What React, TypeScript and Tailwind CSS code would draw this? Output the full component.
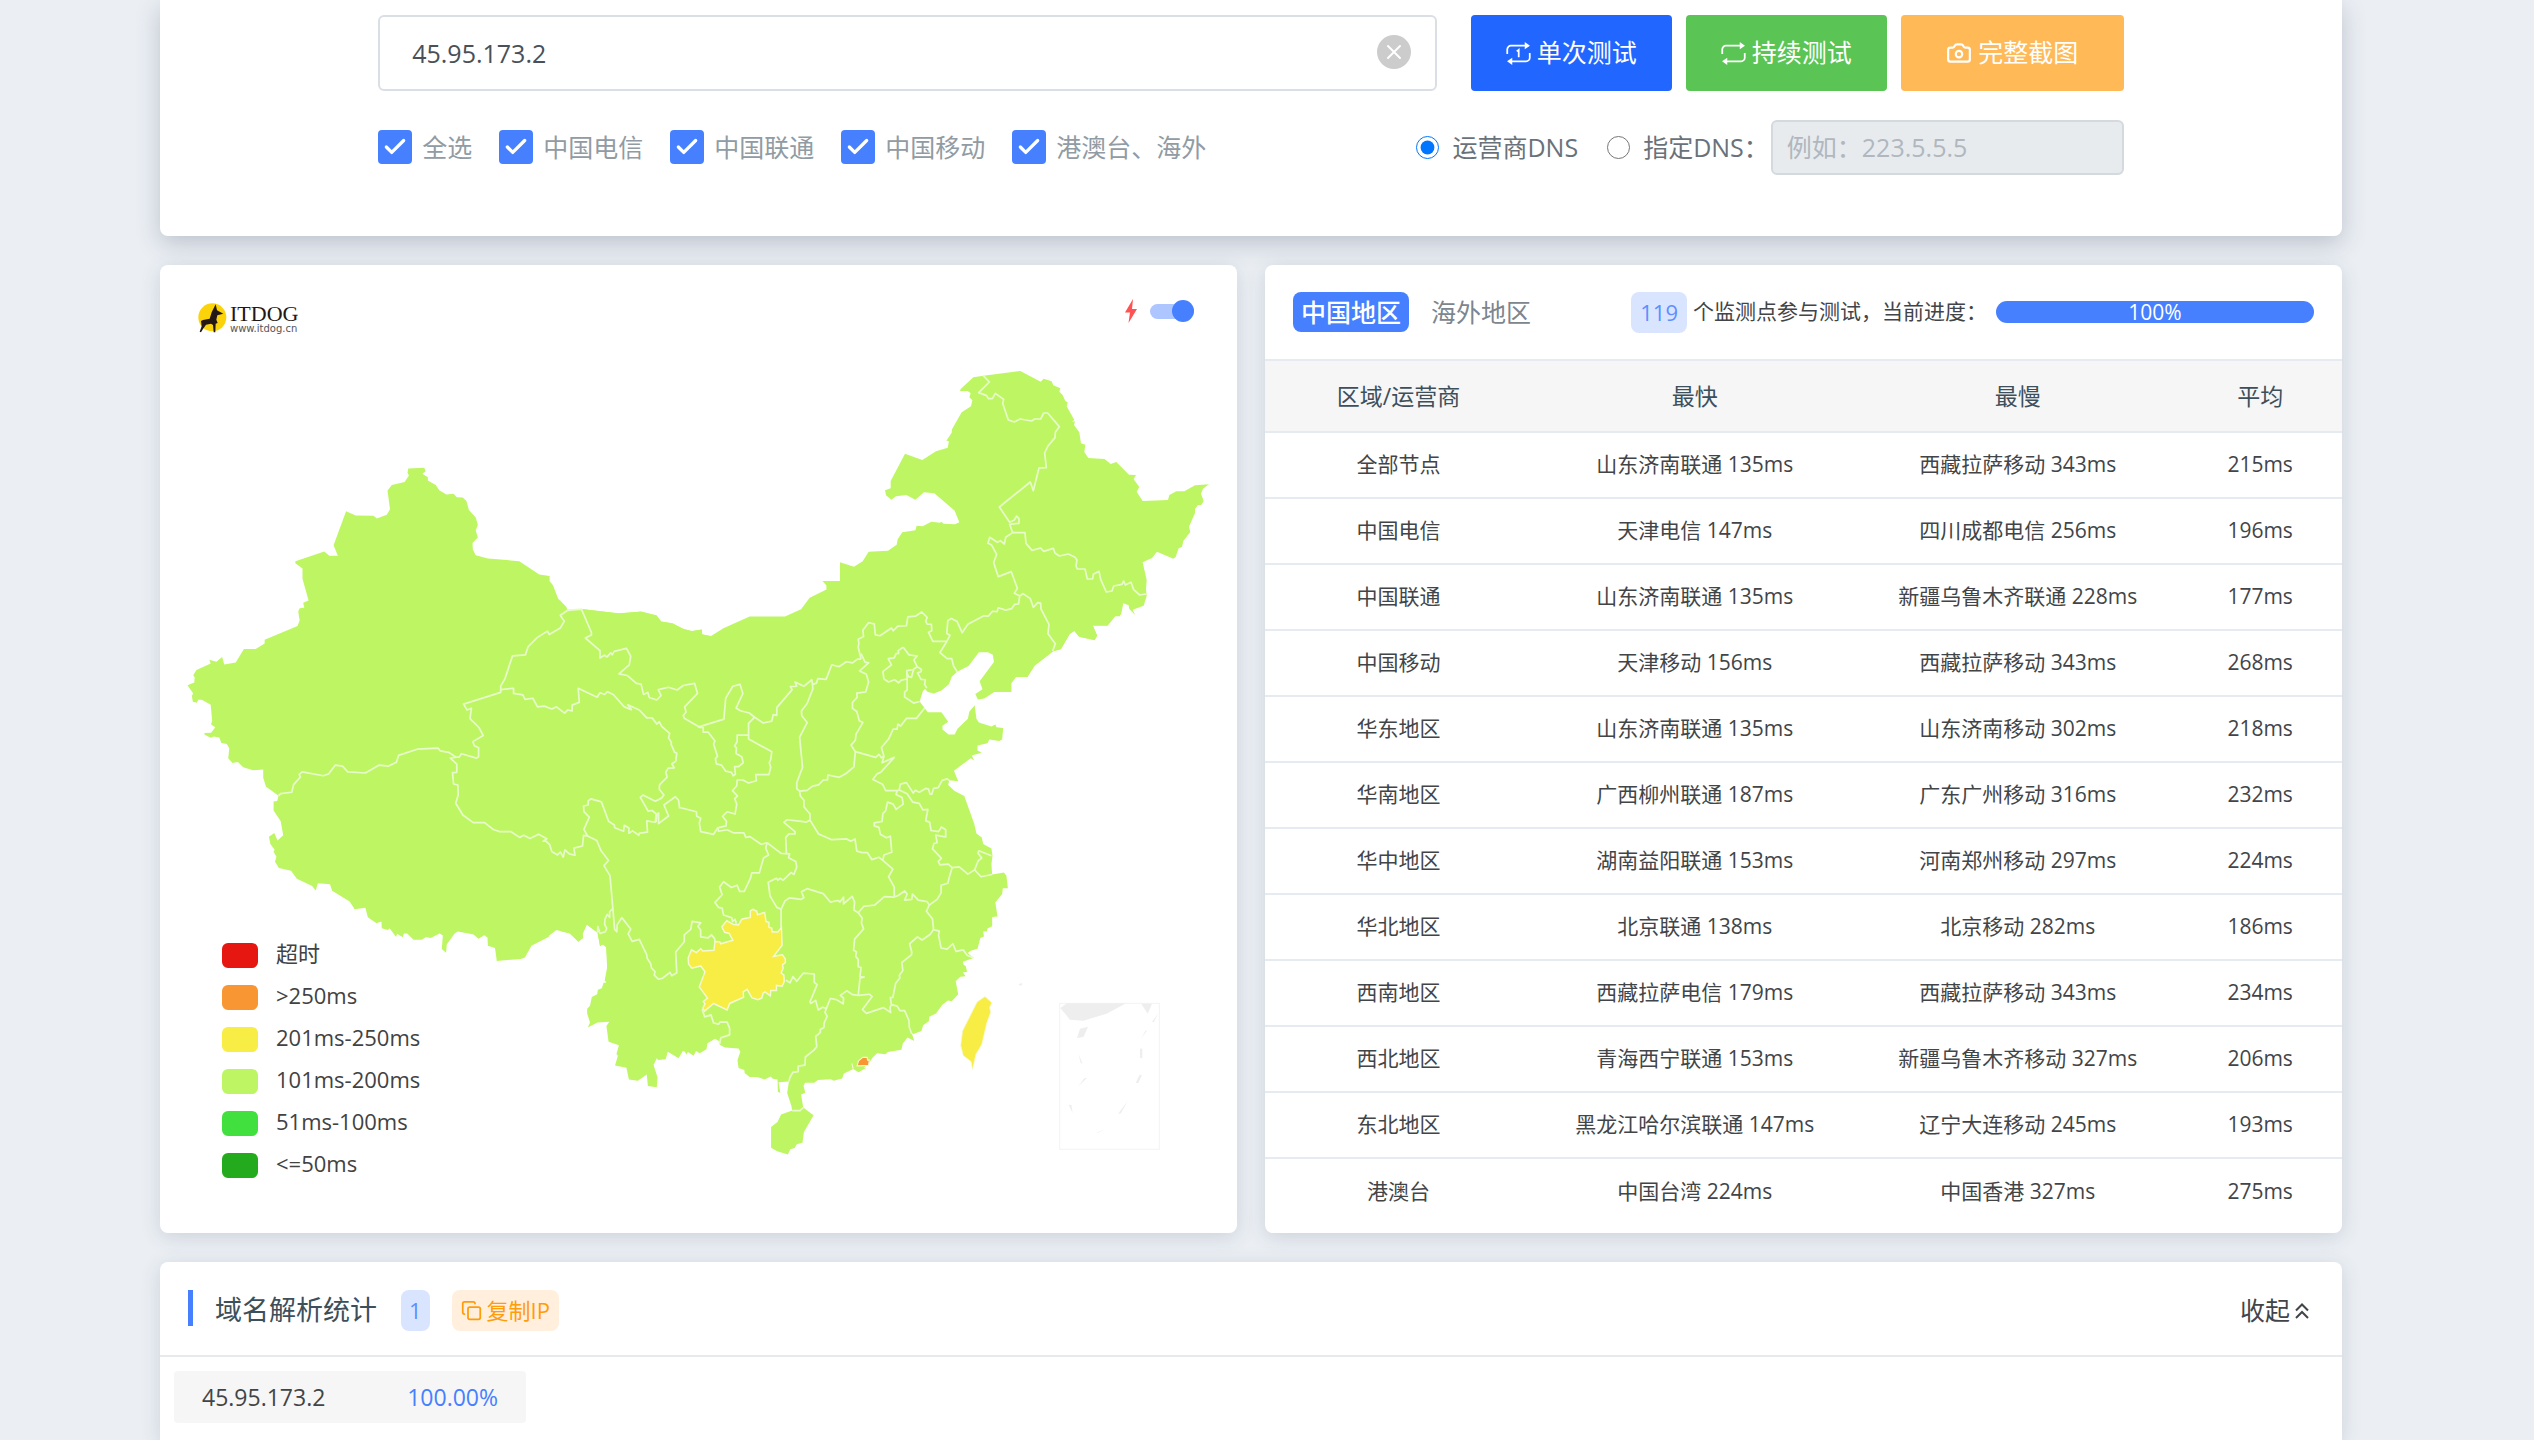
import { useState } from "react";
import { Camera, Check, Copy, X } from "lucide-react";

const carriers = ["全选", "中国电信", "中国联通", "中国移动", "港澳台、海外"];

const legend = [
  { color: "bg-[#e61610]", label: "超时" },
  { color: "bg-[#f79633]", label: ">250ms" },
  { color: "bg-[#f7ed44]", label: "201ms-250ms" },
  { color: "bg-[#bef663]", label: "101ms-200ms" },
  { color: "bg-[#42e03f]", label: "51ms-100ms" },
  { color: "bg-[#24aa1d]", label: "<=50ms" },
];

const rows = [
  ["全部节点", "山东济南联通 135ms", "西藏拉萨移动 343ms", "215ms"],
  ["中国电信", "天津电信 147ms", "四川成都电信 256ms", "196ms"],
  ["中国联通", "山东济南联通 135ms", "新疆乌鲁木齐联通 228ms", "177ms"],
  ["中国移动", "天津移动 156ms", "西藏拉萨移动 343ms", "268ms"],
  ["华东地区", "山东济南联通 135ms", "山东济南移动 302ms", "218ms"],
  ["华南地区", "广西柳州联通 187ms", "广东广州移动 316ms", "232ms"],
  ["华中地区", "湖南益阳联通 153ms", "河南郑州移动 297ms", "224ms"],
  ["华北地区", "北京联通 138ms", "北京移动 282ms", "186ms"],
  ["西南地区", "西藏拉萨电信 179ms", "西藏拉萨移动 343ms", "234ms"],
  ["西北地区", "青海西宁联通 153ms", "新疆乌鲁木齐移动 327ms", "206ms"],
  ["东北地区", "黑龙江哈尔滨联通 147ms", "辽宁大连移动 245ms", "193ms"],
  ["港澳台", "中国台湾 224ms", "中国香港 327ms", "275ms"],
];

// The map is drawn in sections, each with its own scale
const WEST = "translate(160 440) scale(0.35714 0.34438)";
const SOUTH = "translate(560 580) scale(0.35714 0.38265)";
const NORTHEAST = "translate(840 340) scale(0.33333)";
const INSET = "translate(1020 950) scale(0.33333)";

const westLand =
  "M695,80L740,78 744,88 735,95 750,105 750,115 772,128 782,143 802,155 822,153 831,163 848,164 858,174 865,200 884,222 890,243 884,260 890,280 875,296 876,315 884,332 918,341 1006,349 1062,388 1091,392 1091,407 1100,418 1115,458 1138,482 1141,492 1180,488 1284,500 1347,496 1390,506 1403,524 1435,529 1465,546 1489,552 1517,547 1518,561 1543,566 1568,550 1568,1568 1245,1568 1252,1528 1249,1470 1240,1462 1232,1467 1225,1428 1195,1405 1183,1432 1185,1442 1172,1453 1147,1430 1110,1420 1090,1436 1088,1440 1040,1466 1022,1500 1010,1504 943,1510 938,1472 918,1466 917,1442 908,1435 892,1445 878,1433 834,1424 825,1430 803,1462 801,1486 789,1475 792,1436 783,1430 758,1443 745,1440 733,1448 710,1448 692,1430 683,1430 680,1441 664,1431 661,1440 643,1415 638,1420 621,1415 620,1395 606,1400 582,1383 575,1355 545,1360 531,1337 482,1306 476,1287 442,1284 436,1305 426,1292 383,1271 367,1248 333,1240 322,1222 326,1207 318,1193 321,1187 309,1170 305,1149 320,1138 329,1160 345,1145 338,1104 318,1073 318,1047 328,1045 332,1030 297,1004 289,978 289,954 260,956 233,947 218,932 203,935 191,921 194,892 187,880 172,877 166,861 150,858 142,862 125,853 124,848 143,847 155,831 143,823 146,812 142,766 117,751 107,751 103,760 92,757 89,740 93,733 77,709 96,701 97,686 93,680 102,665 142,646 138,635 158,641 174,627 180,649 212,643 235,604 268,604 293,588 293,577 385,537 391,521 387,495 391,486 404,484 401,470 416,463 399,400 399,370 379,355 379,349 460,321 474,333 498,333 486,303 521,204 548,216 598,217 607,225 635,214 644,198 637,144 649,128 685,119 697,100 693,92Z";

const southLand =
  "M0,50L20,75 60,73 165,85 227,80 271,91 283,106 315,111 345,125 369,131 397,127 398,140 424,145 456,124 531,93 630,93 675,74 699,44 746,22 746,12 735,0 1568,0 1568,92 1555,92 1533,117 1492,117 1504,143 1497,154 1455,146 1440,130 1426,140 1403,178 1380,184 1328,222 1309,251 1277,251 1264,267 1264,290 1216,290 1188,307 1170,310 1163,295 1183,283 1175,262 1215,212 1212,193 1198,186 1173,186 1144,222 1112,237 1097,250 1089,270 1068,286 1047,294 1030,290 1022,282 1016,288 1007,315 1021,332 1030,343 1068,343 1087,368 1071,378 1071,388 1088,401 1105,401 1113,386 1142,360 1146,342 1161,325 1166,360 1173,370 1208,380 1219,375 1222,382 1241,384 1238,414 1230,418 1202,414 1197,424 1169,430 1169,443 1181,449 1153,456 1160,470 1150,463 1103,496 1115,523 1090,521 1087,533 1105,549 1132,562 1160,635 1166,660 1181,670 1185,687 1208,699 1211,718 1208,740 1210,767 1243,762 1250,770 1254,803 1240,803 1238,818 1219,840 1225,877 1210,878 1210,902 1197,908 1195,916 1185,916 1187,929 1177,933 1169,961 1150,966 1142,972 1158,985 1128,995 1130,1003 1136,1006 1140,1021 1128,1023 1136,1033 1121,1034 1108,1046 1115,1080 1097,1098 1086,1096 1070,1108 1053,1130 1034,1139 1033,1150 1017,1161 1012,1176 990,1184 985,1182 992,1202 973,1193 960,1209 956,1225 918,1231 911,1237 888,1234 875,1246 864,1262 850,1272 858,1272 836,1284 821,1275 795,1287 790,1300 766,1306 758,1302 722,1304 712,1311 686,1311 682,1320 687,1338 675,1341 681,1376 710,1396 683,1440 679,1468 663,1472 657,1482 645,1485 638,1499 608,1490 591,1481 591,1427 609,1414 619,1394 650,1384 648,1372 636,1338 641,1308 612,1310 617,1338 610,1335 609,1303 596,1301 590,1295 573,1303 552,1296 531,1296 517,1286 516,1278 500,1273 497,1252 505,1230 500,1222 462,1219 447,1212 448,1204 434,1196 413,1208 410,1224 391,1234 381,1228 374,1241 358,1231 354,1238 350,1230 344,1228 332,1247 302,1230 296,1250 275,1252 271,1247 262,1265 273,1297 271,1323 246,1320 243,1290 218,1306 193,1303 186,1272 154,1266 162,1241 158,1236 165,1213 136,1204 130,1163 138,1152 105,1154 78,1167 84,1154 76,1130 76,1118 84,1110 89,1087 104,1080 106,1068 117,1064 122,1050 129,1050 126,1043 131,1025 133,1000 130,955 121,949 112,953 105,917 75,897 63,922 65,933 51,943 27,920 0,915Z";

const northeastLand =
  "M430,104L541,90 602,122 611,113 635,121 640,133 661,142 658,152 668,162 676,180 683,184 680,196 703,237 695,243 705,241 702,252 718,274 723,307 736,311 733,333 745,351 794,354 812,369 829,363 867,401 888,402 881,415 898,438 890,452 908,480 984,477 988,462 1009,451 1033,451 1065,433 1107,430 1089,443 1083,458 1091,480 1084,492 1074,492 1065,504 1065,516 1047,557 1051,573 1030,600 1026,618 1016,622 1007,648 1000,653 951,632 936,651 908,664 920,717 918,745 920,765 911,794 878,806 886,823 868,804 866,793 850,787 843,821 825,824 803,853 758,853 771,883 764,898 717,887 703,870 690,878 662,925 640,930 585,973 562,1008 514,900 0,900 0,664 42,677 68,661 86,632 144,629 170,611 173,595 187,574 226,568 230,554 248,556 274,542 300,545 304,542 311,548 345,550 358,544 344,509 283,457 252,454 226,476 199,462 168,466 154,476 138,463 135,448 152,442 152,420 195,338 247,357 288,331 323,320 327,301 319,299 335,275 336,265 365,214 393,196 397,178 388,169 392,157 383,150 360,150 362,144 400,109Z";

const westBorders = [
  "1141,492 1121,506 1127,516 1132,523 1121,543 1090,562 1085,552 1056,571 1031,597 1023,621 987,624 966,690 954,712 954,730 850,764 860,781 872,776 868,806 893,832 905,855 876,873 880,885 892,891 892,917 886,921 844,908 838,918 829,918",
  "829,918 808,904 785,900 779,892 720,895 668,913 662,933 640,944 614,941 575,964 526,961 511,944 491,941 472,967 457,972 398,961 390,968 393,976 374,998 369,1020 338,1024 332,1030",
  "829,918 813,921 831,938 831,962 819,963 822,996 834,999 835,1028 828,1052 848,1086 877,1108 909,1108 933,1128 950,1134 982,1134 1007,1151 1018,1145 1036,1154 1060,1142 1083,1155 1073,1162 1080,1161 1091,1172 1097,1192 1113,1202 1121,1194 1129,1208 1134,1187 1146,1199 1162,1203 1159,1182 1183,1176 1186,1145 1197,1147 1187,1128 1202,1092 1187,1076 1186,1060 1199,1057 1199,1045 1207,1039 1236,1048 1256,1104 1272,1115 1273,1123 1298,1133 1300,1116 1313,1124 1313,1139 1323,1132 1341,1145 1342,1139 1365,1136 1363,1103 1387,1107 1389,1085 1396,1080 1396,1111 1424,1089 1411,1057 1443,1033 1452,1043 1455,1067",
  "1197,1147 1223,1160 1235,1190 1256,1218 1243,1233 1260,1262 1268,1357 1273,1418 1279,1425 1280,1405 1293,1384 1318,1417 1311,1431 1322,1453 1342,1447 1363,1492 1364,1502 1374,1518 1376,1530 1386,1541 1384,1551 1396,1563 1407,1560 1428,1543 1433,1553 1447,1544 1444,1484 1468,1454 1468,1434 1486,1418 1490,1395 1514,1399 1506,1410 1514,1420 1514,1440 1535,1443 1544,1434 1553,1445 1554,1455",
  "1268,1357 1259,1367 1259,1383 1252,1375 1246,1388 1245,1404 1251,1415 1247,1425 1232,1430 1226,1410 1225,1428",
  "954,722 990,718 990,733 1016,737 1022,750 1044,747 1057,772 1076,770 1097,778 1110,772 1133,790 1142,781 1154,784 1154,767 1174,759 1171,718 1224,744 1232,731 1245,736 1253,728 1270,737 1300,772 1320,780 1310,766 1342,781 1363,804 1378,804 1391,822 1398,815 1405,829 1427,849 1424,862 1432,875 1431,880 1441,904 1447,907 1444,930 1433,938 1440,949 1423,950 1416,962 1420,976 1399,998 1398,1011 1411,1028 1404,1037 1387,1046 1352,1028 1345,1035 1367,1075 1378,1073 1392,1085 1389,1107",
  "1141,492 1180,488 1208,556 1208,563 1191,572 1232,609 1232,630 1244,622 1252,627 1262,615 1266,621 1272,611 1306,602 1318,625 1314,650 1285,676 1309,681 1334,704 1347,706 1354,736 1366,730 1370,745 1391,752 1403,739 1395,722 1424,715 1448,723 1465,710 1497,704 1505,733 1469,772 1473,787 1465,797 1468,805 1509,830",
];

const southBorders = [
  "387,382 459,361 464,306 484,275 504,270 512,294 493,332 505,339 530,345 545,356 569,371 593,366 597,349 607,351 607,331 650,284 645,276 663,275 658,264 683,275 705,258 707,270 718,267 722,255 745,257 761,219 781,224 802,211 819,214 833,204 843,204",
  "387,382 401,383 401,395 415,395 434,418 430,426 441,458 435,465 438,478 452,481 464,497 480,500 485,509 491,505 489,485 500,485 513,475 509,459 493,451 494,436 489,431 496,420 496,403 528,403 528,372 545,356",
  "528,403 528,413 593,446 590,467 586,475 590,487 585,506 548,506 550,522 528,528 512,520 496,520 495,535 483,548 497,562 489,569 495,583 490,609 468,603 455,615 466,628 465,640 442,645 444,654 468,650 485,658 515,658 520,670 532,668 563,688 580,684",
  "335,592 382,603 383,615 394,620 390,633 394,655 430,662 442,645",
  "707,270 708,282 692,320 676,340 677,352 692,370 671,408 679,487 663,527 663,543 671,549 673,562 683,573 683,590 700,609 700,625",
  "671,549 692,547 707,536 724,533 737,520 749,520 750,507 782,513 801,503 823,486 827,446 815,429 827,416 829,400 848,370 838,365 831,341 819,333 819,317 832,304 831,293 856,290 864,264 858,244 839,235 864,214 854,212 843,190",
  "843,204 835,173 837,163 835,152 850,145 848,129 864,109 880,112 883,141 896,143 928,123 933,130 946,118 970,117 974,94 995,92 1013,81 1028,95 1024,105 1028,113 1040,113 1041,130 1032,134 1044,158 1083,158 1092,142 1083,137 1086,103 1096,98 1112,106 1126,135 1142,113 1187,91 1199,92 1211,79 1224,80 1227,70 1248,76 1265,72 1273,61 1284,60 1287,40",
  "1083,158 1064,187 1084,203 1097,203 1102,222 1112,237",
  "961,173 977,193 1000,196 991,206 1000,224 988,232 971,234 972,256 956,259 948,266 937,258 920,264 907,256 904,237 928,219 919,203 936,201 941,190 948,189 947,182 961,173",
  "1000,224 1012,231 1011,237 1001,240 1011,257 1023,258 1021,270 1027,280",
  "971,240 976,250 984,252 990,232",
  "972,256 972,285 965,290 965,303 990,319 1007,315",
  "1021,332 998,359 970,359 954,379 946,374 944,387 933,387 920,413 900,435 907,458 902,475 936,461 898,500 888,504 876,519 903,531 912,548 944,548",
  "827,446 884,461 893,453 900,462 907,458",
  "944,548 950,546 953,531 970,527 989,554 995,547 1006,552 1024,542 1032,544 1036,557 1041,557 1046,542 1059,540 1070,521 1084,517 1090,521",
  "950,546 972,556 988,578 1006,581 1016,598 1030,597 1024,627 1035,630 1039,652 1060,655 1068,643 1080,650 1080,669 1052,664 1056,684 1047,686 1043,700 1068,725 1059,733 1064,742 1087,740 1098,749 1118,747 1142,766 1161,755",
  "944,548 941,558 958,566 961,583 941,597 933,583 917,578 912,600 904,608 902,628 880,632 880,640 893,644 897,662 914,671 925,667 929,709 907,716 904,730 932,753 920,773 936,800 936,823",
  "700,625 724,661 761,676 803,674 814,680 826,674 831,706 846,710 861,710 873,728 893,722 904,730",
  "700,625 690,630 676,628 635,624 627,631 658,655 658,661 641,661 632,670 634,712",
  "580,684 619,712 643,713 640,723 660,733 663,747 655,767 647,762 625,782 616,777 610,782 606,777 583,787 588,823 607,853 619,858 619,906",
  "580,684 576,698 584,716 570,724 558,763 537,763 534,775 516,811 503,811 496,795 480,801 458,786 447,800 454,820 434,840 444,853 454,855 458,873 481,880 483,890 490,884 494,896",
  "619,858 630,836 643,828 675,832 683,828 676,812 692,804 737,817 757,839 778,835 784,839 794,826 794,844 818,824 825,839 823,860 835,867",
  "835,867 851,850 881,847 908,825 936,826 947,822 965,810 972,818 965,834 985,832 987,818 1003,834 1028,838 1034,847",
  "1098,749 1090,774 1086,790 1067,795 1067,815 1056,832 1034,847 1026,863 1043,883 1046,911 1062,915 1060,926 1067,959 1084,962 1100,948 1109,968 1129,964 1140,978 1158,985",
  "1046,911 1036,924 1014,938 1001,930 979,948 985,970 984,977 957,997 960,1018 950,1031 952,1037 940,1051 932,1088 925,1089 928,1107",
  "835,867 846,881 844,894 850,909 825,936 822,965 830,969 828,981 835,989 835,1008 843,1010 840,1034 852,1035 840,1038 835,1083",
  "835,1083 819,1081 803,1071 785,1083 794,1090 793,1105 774,1094 757,1091 746,1117 735,1114 723,1121 716,1096 702,1104 700,1100 720,1055 712,1049 712,1027 681,1025 663,1046 652,1034 644,1050 632,1043",
  "835,1083 867,1080 874,1086 847,1120 858,1130 906,1115 926,1128 924,1115 928,1107 944,1111 952,1123 965,1123 977,1148 978,1166 985,1184",
  "746,1117 742,1127 748,1138 740,1154 739,1167 729,1172 729,1180 716,1190 719,1217 711,1226 687,1244 686,1265 667,1268 667,1282 652,1284 644,1297 641,1308",
  "398,1119 405,1139 423,1134 430,1155 444,1158 449,1152 468,1153 475,1169 475,1186 450,1194 447,1210",
  "650,1384 672,1384 681,1376",
  "1208,718 1173,705 1170,711 1181,724 1171,731 1161,755 1179,773 1210,767",
];

const northeastBorders = [
  "430,104 448,123 416,155 440,164 445,173 457,173 466,157 491,175 488,187 505,237 523,243 540,234 575,240 584,234 602,234 611,216 623,216 658,257 646,274 645,290 624,315 614,336 619,380 597,381 580,449 571,423 478,498 509,544 523,537 530,525 537,533 537,547 509,550 518,575",
  "518,575 497,589 493,609 481,599 472,604 449,589 444,607 454,611 470,640 461,665 475,707 514,692 532,742 523,757 540,765",
  "518,575 555,575 558,607 576,628 602,621 611,631 640,622 645,636 658,645 685,639 705,649 711,657 708,675 712,684 735,684 742,714 758,714 760,700 777,691 782,715 799,753 816,750 821,735 846,730 851,720 856,732 873,724 881,746 899,762 918,759",
  "540,765 549,758 571,773 580,799 593,785 602,786 603,804 627,850 624,878 646,908 638,930",
];

const guizhou =
  "540,858 551,863 553,872 573,866 577,890 585,892 585,905 593,907 594,917 610,917 620,906 622,952 598,981 623,977 631,988 631,997 623,1003 625,1012 619,1024 627,1030 628,1047 622,1059 606,1057 606,1070 590,1070 589,1084 574,1074 569,1077 565,1090 554,1094 537,1089 524,1067 513,1074 514,1088 475,1104 468,1121 430,1104 405,1124 400,1116 406,1105 401,1099 413,1090 390,1061 406,1021 394,1006 369,1012 360,1001 359,985 368,964 382,971 394,961 400,967 431,965 434,942 447,943 450,948 484,939 474,921 461,918 453,904 467,888 486,898 500,899 509,884 533,879 533,862";

const taiwan =
  "1168,1100 1190,1086 1209,1102 1203,1115 1206,1127 1195,1155 1181,1211 1165,1236 1155,1277 1151,1256 1129,1240 1122,1214 1127,1176";

function Borders({ lines, transform }: { lines: string[]; transform: string }) {
  return (
    <g transform={transform} fill="none" stroke="#e8facb" strokeWidth="1.7" strokeLinejoin="round">
      {lines.map((points) => (
        <polyline key={points} points={points} vectorEffect="non-scaling-stroke" />
      ))}
    </g>
  );
}

function ChinaMap() {
  return (
    <svg viewBox="160 264 1077 968" className="block w-full [grid-area:1/1]" aria-hidden="true">
      <g fill="#bef663">
        <path d={westLand} transform={WEST} />
        <path d={southLand} transform={SOUTH} />
        <path d={northeastLand} transform={NORTHEAST} />
      </g>
      <Borders lines={westBorders} transform={WEST} />
      <Borders lines={southBorders} transform={SOUTH} />
      <Borders lines={northeastBorders} transform={NORTHEAST} />
      <g transform={SOUTH} stroke="#f6f8d4">
        <polygon points={guizhou} fill="#f7ed44" strokeWidth="4" />
        <polygon points={taiwan} fill="#f7ed44" strokeWidth="2" />
        <polygon points="836,1254 848,1245 860,1245 861,1252 866,1252 864,1266 832,1267" fill="#f79633" strokeWidth="3" />
        <polyline points="817,1261 821,1275" fill="none" strokeWidth="3" />
        <polygon points="1283,1056 1293,1050 1293,1057" fill="#ececec" stroke="none" />
      </g>
      <g transform={INSET} fill="#eeeeee">
        <rect x="119" y="157" width="299" height="438" fill="none" stroke="#f3f3f3" strokeWidth="3" />
        <path d="M121,171L141,157 318,157 260,188 190,209 150,206Z" />
        <path d="M364,158H396L383,188Z" />
        <path d="M180,233L204,227 191,257 171,262Z" />
        <path d="M175,308L188,338 182,335Z" />
        <path d="M201,381L193,382 174,407Z" />
        <path d="M146,461L154,462 158,487Z" />
        <path d="M323,450L303,487 294,489Z" />
        <path d="M258,534L230,547 232,544Z" />
        <path d="M366,371L355,396 347,396 358,373Z" />
        <path d="M360,293H367V321H360Z" />
        <path d="M382,238L376,240 364,262Z" />
        <path d="M414,188L402,213 396,213Z" />
      </g>
    </svg>
  );
}

function RepeatIcon({ once = false }: { once?: boolean }) {
  return (
    <svg viewBox="0 0 24 24" className="size-[25px]" fill="none" stroke="currentColor" strokeWidth="1.7" aria-hidden="true">
      <path d="M1.2 12.5V8a3.5 3.5 0 0 1 3.5-3.5H19M22.8 11.5V16a3.5 3.5 0 0 1-3.5 3.5H5" />
      <path d="M18 1L23 4.5L18 8ZM6 16L1 19.5L6 23Z" fill="currentColor" stroke="none" />
      {once && <path d="M10.3 10L12.2 8.5V15.5" />}
    </svg>
  );
}

function Logo() {
  return (
    <div className="flex items-start gap-[2px]">
      <svg viewBox="0 0 90 90" className="size-[30px]" aria-hidden="true">
        <circle cx="43" cy="43" r="42" fill="#fbd30b" />
        <path
          d="M53,4L57,22 76,32 58,37 55,50 59,60 53,62 52,88 47,88 45,66 39,62 24,65 15,78 9,88 5,86 11,70 9,54 15,51 35,47 41,28Z"
          fill="#231815"
        />
      </svg>
      <div className="flex flex-col gap-[2px] pt-[2px]">
        <span className="font-['Liberation_Serif',serif] text-[22px] leading-[18px] text-[#231815]">ITDOG</span>
        <span className="font-['DejaVu_Sans',sans-serif] text-[10px] leading-[8px] text-[#555]">www.itdog.cn</span>
      </div>
    </div>
  );
}

export default function App() {
  const [ip, setIp] = useState("45.95.173.2");

  return (
    <main className="flex min-h-screen flex-col gap-[29px] bg-[#ebeff4] pr-48 pl-40 font-['Open_Sans','Noto_Sans_CJK_SC',sans-serif] text-[21px] text-[#424548]">
      <section className="rounded-b-lg bg-white px-[10%] pt-[15px] pb-[61px] shadow-[0_8px_24px_rgba(40,60,80,0.24)]">
        <div className="flex gap-[14px]">
          <div className="relative mr-5 flex-1">
            <input
              aria-label="IP"
              value={ip}
              onChange={(e) => setIp(e.target.value)}
              className="h-[76px] w-full rounded-md border-2 border-[#d9dfe5] bg-white px-8 text-[25px] text-[#495057] outline-none"
            />
            <button
              type="button"
              aria-label="清空"
              onClick={() => setIp("")}
              className="absolute top-5 right-[26px] flex size-[34px] items-center justify-center rounded-full bg-[#cccccc] text-white"
            >
              <X className="size-6" strokeWidth={2} />
            </button>
          </div>
          <button type="button" className="flex h-[76px] w-[201px] items-center justify-center gap-[6px] rounded bg-[#2166ff] text-[25px] text-white">
            <RepeatIcon once />
            单次测试
          </button>
          <button type="button" className="flex h-[76px] w-[201px] items-center justify-center gap-[6px] rounded bg-[#5ac455] text-[25px] text-white">
            <RepeatIcon />
            持续测试
          </button>
          <button type="button" className="flex h-[76px] w-[223px] items-center justify-center gap-[6px] rounded bg-[#ffb957] text-[25px] text-white">
            <Camera className="size-[26px]" strokeWidth={2} />
            完整截图
          </button>
        </div>

        <div className="mt-7 flex items-center justify-between text-[25px] leading-[56px]">
          <div className="flex gap-[27px] text-[#919ba3]">
            {carriers.map((name) => (
              <label key={name} className="flex items-center gap-[10px]">
                <span className="relative flex size-[34px]">
                  <input type="checkbox" defaultChecked className="peer size-full appearance-none rounded bg-[#d9dfe5] checked:bg-[#4680ff]" />
                  <Check className="pointer-events-none absolute inset-1 hidden size-[26px] text-white peer-checked:block" strokeWidth={3} />
                </span>
                {name}
              </label>
            ))}
          </div>
          <div className="flex items-center text-[#69727a]">
            <label className="mr-[29px] flex items-center gap-[13px]">
              <input type="radio" name="dns" defaultChecked className="size-[23px]" />
              运营商DNS
            </label>
            <label className="mr-[2px] flex items-center gap-[13px]">
              <input type="radio" name="dns" className="size-[23px]" />
              指定DNS：
            </label>
            <input
              aria-label="指定DNS"
              disabled
              placeholder="例如：223.5.5.5"
              className="h-[55px] w-[353px] rounded-md border-2 border-[#d3d9de] bg-[#e7ebee] px-[14px] placeholder:text-[#b0b7be]"
            />
          </div>
        </div>
      </section>

      <div className="grid grid-cols-2 gap-7">
        <section className="grid rounded-lg bg-white shadow-[0_4px_20px_rgba(40,60,80,0.16)]">
          <ChinaMap />
          <div className="flex flex-col justify-between [grid-area:1/1]">
            <div className="flex items-start justify-between pt-[34px] pr-[43px] pl-[38px]">
              <div className="pt-1">
                <Logo />
              </div>
              <div className="flex items-center gap-[13px]">
                <svg viewBox="0 0 12 24" className="h-6 w-3" fill="#ff5252" aria-hidden="true">
                  <path d="M8 0L0 13.5H5L3.5 24L12 10H7Z" />
                </svg>
                <input
                  type="checkbox"
                  role="switch"
                  aria-label="极速模式"
                  defaultChecked
                  className="flex h-[15px] w-11 appearance-none items-center justify-end rounded-full bg-[#adc6ff] before:size-[22px] before:shrink-0 before:rounded-full before:bg-[#4680ff]"
                />
              </div>
            </div>
            <ul className="flex flex-col gap-[17px] pb-[55px] pl-[62px]">
              {legend.map((item) => (
                <li key={item.label} className="flex h-[25px] items-start gap-[18px] text-[22px] leading-[20px] text-[#424242]">
                  <span className={`h-[25px] w-9 rounded-md ${item.color}`} />
                  {item.label}
                </li>
              ))}
            </ul>
          </div>
        </section>

        <section className="rounded-lg bg-white shadow-[0_4px_20px_rgba(40,60,80,0.16)]">
          <div className="flex h-[94px] items-center justify-between px-7">
            <div className="flex gap-[14px] text-[25px] leading-10">
              <button type="button" className="rounded-lg bg-[#4680ff] px-2 font-medium text-white">
                中国地区
              </button>
              <button type="button" className="px-2 text-[#7d858d]">
                海外地区
              </button>
            </div>
            <div className="flex items-center">
              <span className="mr-[6px] rounded-lg bg-[#d9e5ff] px-[9px] text-[22px] leading-[41px] text-[#5c8fff]">119</span>
              <span className="mr-[9px]">个监测点参与测试，当前进度：</span>
              <div className="flex h-[22px] w-[318px] items-center justify-center rounded-full bg-[#4680ff] leading-[22px] text-white">
                100%
              </div>
            </div>
          </div>
          <table className="w-full table-fixed text-center">
            <thead className="bg-[#f6f6f6] text-[23px] text-[#3d4f5b]">
              <tr className="h-[72px] border-y-2 border-[#e5ebf1]">
                <th className="w-[24.8%] font-normal">区域/运营商</th>
                <th className="w-[30.2%] font-normal">最快</th>
                <th className="w-[29.8%] font-normal">最慢</th>
                <th className="w-[15.2%] font-normal">平均</th>
              </tr>
            </thead>
            <tbody>
              {rows.map((row) => (
                <tr key={row[0]} className="h-[66px] border-b-2 border-[#e5ebf1] last:border-0">
                  {row.map((cell, i) => (
                    <td key={i}>{cell}</td>
                  ))}
                </tr>
              ))}
            </tbody>
          </table>
        </section>
      </div>

      <section className="flex-1 rounded-t-lg bg-white shadow-[0_4px_20px_rgba(40,60,80,0.16)]">
        <div className="flex items-start justify-between border-b-2 border-[#e6eaed] px-7 pt-7 pb-6">
          <div className="flex items-start text-[22px] leading-[41px]">
            <h2 className="mr-6 flex items-start text-[27px] leading-10 text-[#3d4f5b]">
              <span className="mr-[22px] h-9 w-[5px] bg-[#4680ff]" />
              域名解析统计
            </h2>
            <span className="mr-[22px] rounded-lg bg-[#d9e5ff] px-2 text-[#5c8fff]">1</span>
            <button type="button" className="flex items-center gap-[5px] rounded-lg bg-[#ffefdc] px-[9px] text-[#ff9c0a]">
              <Copy className="size-[21px]" />
              复制IP
            </button>
          </div>
          <button type="button" className="flex items-center gap-[5px] pr-[5px] text-[25px] leading-[41px]">
            收起
            <svg viewBox="0 0 14 16" className="h-4 w-[14px]" fill="none" stroke="currentColor" strokeWidth="2" aria-hidden="true">
              <path d="M1 7.5L7 1.5L13 7.5M1 15L7 9L13 15" />
            </svg>
          </button>
        </div>
        <div className="px-[14px] py-[14px] text-[23px] leading-[52px]">
          <div className="flex w-[352px] justify-between rounded bg-[#f6f6f6] px-7">
            <span>45.95.173.2</span>
            <span className="text-[#4680ff]">100.00%</span>
          </div>
        </div>
      </section>
    </main>
  );
}
